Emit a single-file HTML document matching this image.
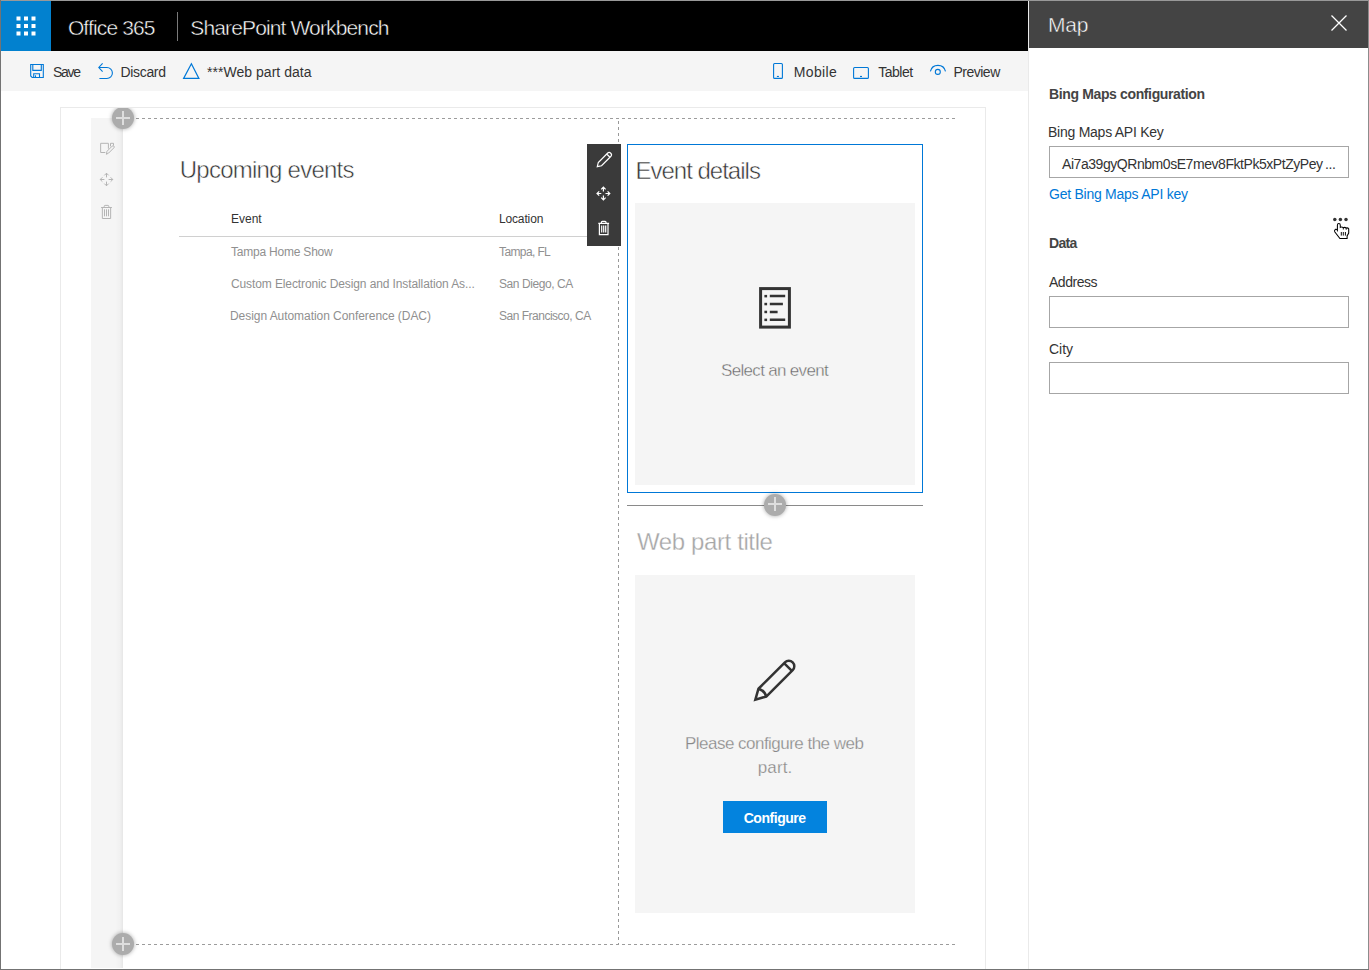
<!DOCTYPE html>
<html><head><meta charset="utf-8">
<style>
html,body{margin:0;padding:0;}
body{width:1369px;height:970px;overflow:hidden;position:relative;background:#fff;font-family:"Liberation Sans", sans-serif;}
.a{position:absolute;}
.t{position:absolute;white-space:nowrap;font-family:"Liberation Sans", sans-serif;}
</style></head><body>
<!-- top bar -->
<div class="a" style="left:0;top:0;width:1028px;height:51px;background:#000"></div>
<div class="a" style="left:0;top:0;width:51px;height:51px;background:#0281cf"></div>
<div class="a" style="left:177px;top:12px;width:1px;height:29px;background:#7a7a7a"></div>
<!-- command bar -->
<div class="a" style="left:0;top:51px;width:1028px;height:40px;background:#f5f5f5"></div>
<!-- canvas -->
<div class="a" style="left:60px;top:107px;width:924px;height:870px;border:1px solid #eaeaea;background:#fff"></div>
<div class="a" style="left:91px;top:118px;width:32px;height:850px;background:#f5f5f5"></div>
<div class="a" style="left:115px;top:118px;width:8px;height:850px;background:linear-gradient(to right,rgba(0,0,0,0),rgba(0,0,0,0.015) 60%,rgba(0,0,0,0.06))"></div>
<!-- dashed lines -->
<div class="a" style="left:130px;top:118px;width:826px;height:1px;background:repeating-linear-gradient(to right,#9c9c9c 0,#9c9c9c 3px,transparent 3px,transparent 6px)"></div>
<div class="a" style="left:130px;top:944px;width:826px;height:1px;background:repeating-linear-gradient(to right,#9c9c9c 0,#9c9c9c 3px,transparent 3px,transparent 6px)"></div>
<div class="a" style="left:618px;top:121px;width:1px;height:823px;background:repeating-linear-gradient(to bottom,#999 0,#999 3px,transparent 3px,transparent 6px)"></div>
<!-- table header line -->
<div class="a" style="left:179px;top:236px;width:408px;height:1px;background:#d0d0d0"></div>
<!-- selected web part -->
<div class="a" style="left:627px;top:144px;width:294px;height:347px;border:1px solid #0078d7"></div>
<div class="a" style="left:635px;top:203px;width:280px;height:282px;background:#f5f5f5"></div>
<div class="a" style="left:627px;top:505px;width:296px;height:1px;background:#8a8a8a"></div>
<div class="a" style="left:635px;top:575px;width:280px;height:338px;background:#f5f5f5"></div>
<div class="a" style="left:723px;top:801px;width:104px;height:32px;background:#0383de"></div>
<!-- toolbar -->
<div class="a" style="left:587px;top:144px;width:34px;height:102px;background:#3a3a3a"></div>
<!-- plus circles -->
<div class="a" style="left:100px;top:108px;width:50px;height:40px;overflow:hidden"><div class="a" style="left:12px;top:-1px;width:22px;height:22px;border-radius:50%;background:#acacac;box-shadow:0 0 4px rgba(0,0,0,.35)"></div></div>
<div class="a" style="left:112px;top:933px;width:22px;height:22px;border-radius:50%;background:#acacac;box-shadow:0 0 4px rgba(0,0,0,.35)"></div>
<div class="a" style="left:764px;top:493.5px;width:22px;height:22px;border-radius:50%;background:#acacac;box-shadow:0 0 4px rgba(0,0,0,.35)"></div>
<!-- panel -->
<div class="a" style="left:1028px;top:0;width:341px;height:970px;background:#fff;border-left:1px solid #eaeaea;box-sizing:border-box"></div>
<div class="a" style="left:1029px;top:0;width:340px;height:48px;background:#444"></div>
<div class="a" style="left:1049px;top:146px;width:298px;height:30px;border:1px solid #a6a6a6"></div>
<div class="a" style="left:1049px;top:296px;width:298px;height:30px;border:1px solid #a6a6a6"></div>
<div class="a" style="left:1049px;top:362px;width:298px;height:30px;border:1px solid #a6a6a6"></div>
<div id="o365" class="t" style="left:67.90px;top:17.22px;font-size:21px;line-height:21px;color:#fff;font-weight:400;letter-spacing:-0.856px;-webkit-text-stroke:0.45px #000">Office 365</div>
<div id="spwb" class="t" style="left:190.30px;top:17.22px;font-size:21px;line-height:21px;color:#fff;font-weight:400;letter-spacing:-0.863px;-webkit-text-stroke:0.45px #000">SharePoint Workbench</div>
<div id="save" class="t" style="left:53.00px;top:64.55px;font-size:14px;line-height:14px;color:#333;font-weight:400;letter-spacing:-1.333px">Save</div>
<div id="disc" class="t" style="left:120.60px;top:64.55px;font-size:14px;line-height:14px;color:#333;font-weight:400;letter-spacing:-0.350px">Discard</div>
<div id="wpd" class="t" style="left:207.00px;top:64.55px;font-size:14px;line-height:14px;color:#333;font-weight:400;letter-spacing:0.033px">***Web part data</div>
<div id="mob" class="t" style="left:793.70px;top:64.55px;font-size:14px;line-height:14px;color:#333;font-weight:400;letter-spacing:0.380px">Mobile</div>
<div id="tab" class="t" style="left:878.30px;top:64.55px;font-size:14px;line-height:14px;color:#333;font-weight:400;letter-spacing:-0.520px">Tablet</div>
<div id="prev" class="t" style="left:953.40px;top:64.55px;font-size:14px;line-height:14px;color:#333;font-weight:400;letter-spacing:-0.483px">Preview</div>
<div id="map" class="t" style="left:1048.00px;top:14.22px;font-size:21px;line-height:21px;color:#fff;font-weight:400;letter-spacing:-0.250px;-webkit-text-stroke:0.45px #444">Map</div>
<div id="bmc" class="t" style="left:1049.00px;top:87.05px;font-size:14px;line-height:14px;color:#444;font-weight:700;letter-spacing:-0.364px">Bing Maps configuration</div>
<div id="bmk" class="t" style="left:1048.00px;top:125.35px;font-size:14px;line-height:14px;color:#333;font-weight:400;letter-spacing:-0.250px">Bing Maps API Key</div>
<div id="key" class="t" style="left:1062.00px;top:157.05px;font-size:14px;line-height:14px;color:#333;font-weight:400;letter-spacing:-0.445px">Ai7a39gyQRnbm0sE7mev8FktPk5xPtZyPey ...</div>
<div id="get" class="t" style="left:1049.00px;top:186.65px;font-size:14px;line-height:14px;color:#0078d7;font-weight:400;letter-spacing:-0.250px">Get Bing Maps API key</div>
<div id="data" class="t" style="left:1049.00px;top:236.15px;font-size:14px;line-height:14px;color:#444;font-weight:700;letter-spacing:-0.667px">Data</div>
<div id="addr" class="t" style="left:1049.00px;top:275.45px;font-size:14px;line-height:14px;color:#333;font-weight:400;letter-spacing:-0.483px">Address</div>
<div id="city" class="t" style="left:1049.00px;top:341.75px;font-size:14px;line-height:14px;color:#333;font-weight:400;letter-spacing:0.000px">City</div>
<div id="upc" class="t" style="left:179.80px;top:158.28px;font-size:24px;line-height:24px;color:#333;font-weight:400;letter-spacing:-0.771px;-webkit-text-stroke:0.5px #fff">Upcoming events</div>
<div id="hev" class="t" style="left:231.00px;top:213.14px;font-size:12px;line-height:12px;color:#333;font-weight:400;letter-spacing:0.000px">Event</div>
<div id="hloc" class="t" style="left:498.90px;top:213.14px;font-size:12px;line-height:12px;color:#333;font-weight:400;letter-spacing:-0.129px">Location</div>
<div id="r1a" class="t" style="left:231.00px;top:245.94px;font-size:12px;line-height:12px;color:#909090;font-weight:400;letter-spacing:-0.214px">Tampa Home Show</div>
<div id="r1b" class="t" style="left:499.00px;top:245.94px;font-size:12px;line-height:12px;color:#909090;font-weight:400;letter-spacing:-0.612px">Tampa, FL</div>
<div id="r2a" class="t" style="left:231.00px;top:278.44px;font-size:12px;line-height:12px;color:#909090;font-weight:400;letter-spacing:-0.109px">Custom Electronic Design and Installation As...</div>
<div id="r2b" class="t" style="left:499.00px;top:278.44px;font-size:12px;line-height:12px;color:#909090;font-weight:400;letter-spacing:-0.417px">San Diego, CA</div>
<div id="r3a" class="t" style="left:230.00px;top:309.64px;font-size:12px;line-height:12px;color:#909090;font-weight:400;letter-spacing:-0.055px">Design Automation Conference (DAC)</div>
<div id="r3b" class="t" style="left:499.00px;top:309.64px;font-size:12px;line-height:12px;color:#909090;font-weight:400;letter-spacing:-0.494px">San Francisco, CA</div>
<div id="evd" class="t" style="left:635.40px;top:158.78px;font-size:24px;line-height:24px;color:#333;font-weight:400;letter-spacing:-0.992px;-webkit-text-stroke:0.5px #fff">Event details</div>
<div id="sel" class="t" style="left:721.00px;top:362.11px;font-size:17px;line-height:17px;color:#666;font-weight:400;letter-spacing:-0.679px;-webkit-text-stroke:0.4px #f5f5f5">Select an event</div>
<div id="wpt" class="t" style="left:637.00px;top:529.98px;font-size:24px;line-height:24px;color:#a6a6a6;font-weight:400;letter-spacing:-0.385px;-webkit-text-stroke:0.3px #fff">Web part title</div>
<div id="pc1" class="t" style="left:685.00px;top:734.61px;font-size:17px;line-height:17px;color:#888;font-weight:400;letter-spacing:-0.522px;-webkit-text-stroke:0.25px #f5f5f5">Please configure the web</div>
<div id="pc2" class="t" style="left:757.70px;top:758.51px;font-size:17px;line-height:17px;color:#888;font-weight:400;letter-spacing:0.150px;-webkit-text-stroke:0.25px #f5f5f5">part.</div>
<div id="cfg" class="t" style="left:743.70px;top:811.45px;font-size:14px;line-height:14px;color:#fff;font-weight:700;letter-spacing:-0.462px">Configure</div>
<svg class="a" style="left:0;top:0" width="1369" height="970" viewBox="0 0 1369 970">
<!-- waffle -->
<g fill="#fff">
<rect x="16.5" y="16.5" width="4" height="4"/><rect x="24" y="16.5" width="4" height="4"/><rect x="31.5" y="16.5" width="4" height="4"/>
<rect x="16.5" y="24" width="4" height="4"/><rect x="24" y="24" width="4" height="4"/><rect x="31.5" y="24" width="4" height="4"/>
<rect x="16.5" y="31.5" width="4" height="4"/><rect x="24" y="31.5" width="4" height="4"/><rect x="31.5" y="31.5" width="4" height="4"/>
</g>
<!-- command icons -->
<g fill="none" stroke="#0078d7" stroke-width="1.1">
<path d="M30.7 64.5H43.3V77.5H32.2L30.7 76Z"/>
<path d="M32.8 64.5V70.4H41.3V64.5"/>
<path d="M33.7 77.5V73.7H39.5V77.5"/>
<path d="M35.5 75.3V77.5"/>
<path d="M102.6 63.3L98.8 67.5L102.6 71.6M98.8 67.5H106.9A5.5 5.5 0 0 1 106.9 78.5H99.4"/>
<path d="M191.4 63.8L183.6 78.4H198.9Z" stroke-width="1.2"/>
<rect x="773.6" y="63.5" width="8.8" height="14.9" rx="1"/>
<rect x="853.6" y="67.5" width="14.8" height="10.9" rx="1"/>
<path d="M930.4 71.4A7.75 7.75 0 0 1 945.5 71.4"/>
<circle cx="937.8" cy="71.9" r="2.5"/>
</g>
<g fill="#0078d7"><rect x="776.9" y="75.9" width="2" height="1.1"/><rect x="860" y="75.9" width="2" height="1.1"/></g>
<!-- close X -->
<path d="M1331.5 15.5L1346.5 30.5M1346.5 15.5L1331.5 30.5" stroke="#fff" stroke-width="1.3"/>

<!-- outer border -->
<rect x="0" y="0.5" width="1369" height="1" fill="#999" transform="translate(0,-0.5)"/>
<rect x="1368" y="0" width="1" height="970" fill="#8c8c8c"/>
<rect x="0" y="969" width="1369" height="1" fill="#737373"/>
<rect x="0" y="0" width="1" height="970" fill="#737373"/>
<!-- strip icons -->
<g fill="none" stroke="#b4b4b4" stroke-width="1">
<path d="M108.4 148.7V143.3H100.65V152.5H105.3M110.5 146.4V143.3H113.5V145.5"/>
<path d="M106.4 154.3L107 151.3L112.2 146.1A1.2 1.2 0 0 1 113.9 147.8L108.7 153Z"/>
<g transform="translate(106.5,179.5)"><path id="mv" d="M0 -2.1V-6.3M-2.2 -4.1L0 -6.3L2.2 -4.1M0 2.1V6.3M-2.2 4.1L0 6.3L2.2 4.1M-2.1 0H-6.3M-4.1 -2.2L-6.3 0L-4.1 2.2M2.1 0H6.3M4.1 -2.2L6.3 0L4.1 2.2"/></g>
<g transform="translate(106.5,207.5)"><path d="M-5.4 0H5.4M-2.3 0V-1.2A0.9 0.9 0 0 1 -1.4 -2.1H1.4A0.9 0.9 0 0 1 2.3 -1.2V0M-4.15 0V11H4.15V0M-2 1.8V8.8M0 1.8V8.8M2 1.8V8.8"/></g>
</g>
<!-- toolbar icons -->
<g fill="none" stroke="#fff" stroke-width="1.2">
<g transform="translate(597.3,166.7) rotate(-45)"><path d="M0 0L3.7 -2.3H16.7A2.3 2.3 0 0 1 16.7 2.3H3.7Z M15.6 -2.3V2.3"/></g>
<g transform="translate(603.4,193.5)"><path d="M0 -2.1V-6.4M-2.2 -4.2L0 -6.4L2.2 -4.2M0 2.1V6.4M-2.2 4.2L0 6.4L2.2 4.2M-2.1 0H-6.4M-4.2 -2.2L-6.4 0L-4.2 2.2M2.1 0H6.4M4.2 -2.2L6.4 0L4.2 2.2"/></g>
<g transform="translate(603.7,223.4)"><path d="M-5.4 0H5.4M-2.3 0V-1.2A0.9 0.9 0 0 1 -1.4 -2.1H1.4A0.9 0.9 0 0 1 2.3 -1.2V0M-4.3 0V11.2H4.3V0M-2 2V9M0 2V9M2 2V9"/></g>
</g>
<!-- doc icon -->
<g fill="none" stroke="#333">
<rect x="760.6" y="288.6" width="28.8" height="38.5" stroke-width="3"/>
<path d="M769.8 296.1H785.2M769.8 304H782.9M769.8 311.9H777.6M769.8 319.8H785.2" stroke-width="2.5"/>
</g>
<g fill="#333"><rect x="764.4" y="294.9" width="2.7" height="2.5"/><rect x="764.4" y="302.8" width="2.7" height="2.5"/><rect x="764.4" y="310.7" width="2.7" height="2.5"/><rect x="764.4" y="318.6" width="2.7" height="2.5"/></g>
<!-- big pencil -->
<g transform="translate(754.3,700.7) rotate(-45)" fill="none" stroke="#333" stroke-width="2.5" stroke-linejoin="miter">
<path d="M1.5 0L11.4 -5.5H48.8A5.5 5.5 0 0 1 48.8 5.5H11.4Z"/>
<path d="M47.6 -5.5V5.5M11.4 -5.5Q14.5 0 11.4 5.5"/>
</g>
<!-- cursor -->
<path d="M1337.4 230.3V225.2Q1337.4 223.5 1338.8 223.5Q1340.3 223.5 1340.3 225.2V227.4Q1341.8 226.6 1343.3 227.7Q1344.8 226.9 1346.2 228Q1347.8 227.5 1348.7 228.8V233.1L1347.1 236V238.5H1339.9L1334.7 231.7Q1334 230.3 1335.6 229.3Q1336.6 229 1337.4 230.3Z" fill="#fff" stroke="#000" stroke-width="1.05"/>
<path d="M1341.3 232V235.6M1343.3 232V235.6M1345.4 232V235.6M1343.3 227.8V229.5M1346.2 228.1V229.7" stroke="#000" stroke-width="0.95"/>
<!-- dots -->
<g fill="#333"><circle cx="1334.8" cy="219.6" r="1.75"/><circle cx="1340.4" cy="219.6" r="1.75"/><circle cx="1346" cy="219.6" r="1.75"/></g>
<!-- plus signs -->
<g stroke="#dedede" stroke-width="2">
<path d="M116 118H130M123 111V125"/>
<path d="M116 944H130M123 937V951"/>
<path d="M768 504H782M775 497V511"/>
</g>
</svg>
</body></html>
